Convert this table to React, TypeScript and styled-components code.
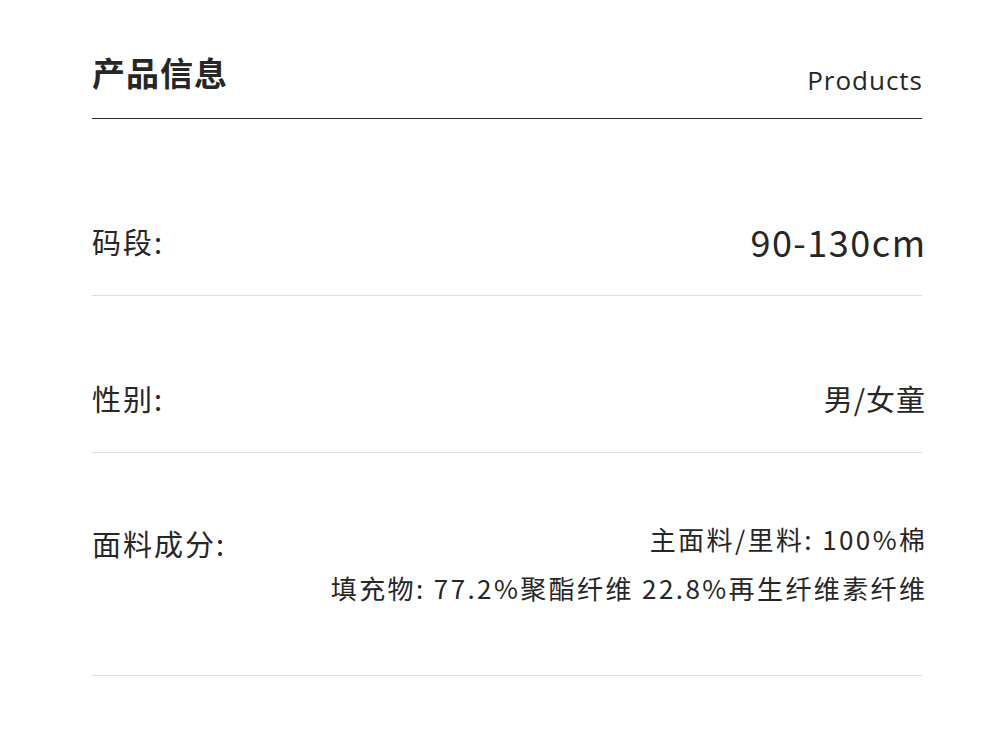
import styled, { createGlobalStyle } from "styled-components";

const GlobalStyle = createGlobalStyle`
  body {
    margin: 0;
    background: #ffffff;
    font-family: "Noto Sans CJK SC", "Noto Sans", sans-serif;
    color: #262626;
  }
`;

const Page = styled.div`
  width: 1000px;
  height: 738px;
  padding: 0 78px 0 92px;
  box-sizing: border-box;
  overflow: hidden;
`;

const Header = styled.div`
  display: flex;
  justify-content: space-between;
  align-items: flex-end;
  padding-top: 50px;
  padding-bottom: 24px;
  border-bottom: 1px solid #2a2a2a;
`;

const Title = styled.h1`
  margin: 0;
  font-size: 33px;
  line-height: 44px;
  font-weight: 600;
  letter-spacing: 1px;
`;

const EnTitle = styled.span`
  font-family: "Open Sans", sans-serif;
  font-size: 26px;
  line-height: 30px;
  letter-spacing: 1px;
  margin-right: -1px;
  margin-bottom: -1px;
`;

const Row = styled.div<{ $top: number; $bottom: number }>`
  display: flex;
  justify-content: space-between;
  align-items: flex-start;
  padding: ${(p) => p.$top}px 0 ${(p) => p.$bottom}px;
  border-bottom: 1px solid #dcdcdc;
`;

const Label = styled.div`
  font-size: 29px;
  line-height: 40px;
  letter-spacing: 2px;
`;

const Values = styled.div<{ $shift?: number }>`
  display: flex;
  flex-direction: column;
  align-items: flex-end;
  gap: 9px;
  margin-top: ${(p) => p.$shift ?? 0}px;
`;

const Value = styled.div<{ $size: number; $spacing: number }>`
  font-size: ${(p) => p.$size}px;
  line-height: 40px;
  letter-spacing: ${(p) => p.$spacing}px;
  margin-right: ${(p) => -(p.$spacing + 3)}px;
  white-space: nowrap;
`;

export default function App() {
  return (
    <>
      <GlobalStyle />
      <Page>
        <Header>
          <Title>产品信息</Title>
          <EnTitle>Products</EnTitle>
        </Header>
        <Row $top={102} $bottom={34}>
          <Label>码段:</Label>
          <Values>
            <Value $size={36} $spacing={1.5}>90-130cm</Value>
          </Values>
        </Row>
        <Row $top={82} $bottom={34}>
          <Label>性别:</Label>
          <Values>
            <Value $size={29} $spacing={1}>男/女童</Value>
          </Values>
        </Row>
        <Row $top={70} $bottom={67}>
          <Label>面料成分:</Label>
          <Values $shift={-4}>
            <Value $size={26} $spacing={2.4}>主面料/里料: 100%棉</Value>
            <Value $size={26} $spacing={2.4}>填充物: 77.2%聚酯纤维 22.8%再生纤维素纤维</Value>
          </Values>
        </Row>
      </Page>
    </>
  );
}
